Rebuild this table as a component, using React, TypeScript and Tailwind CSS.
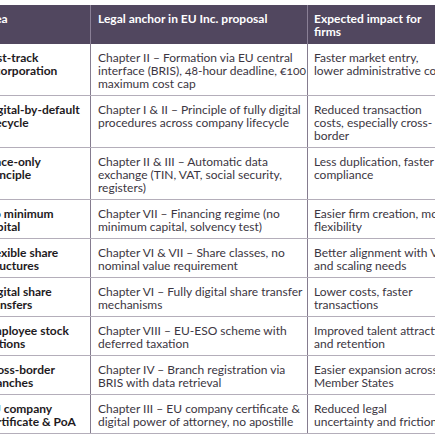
import React from "react";

const rows: [string[], string[], string[], number][] = [
  [["Fast-track", "incorporation"], ["Chapter II – Formation via EU central", "interface (BRIS), 48-hour deadline, €100", "maximum cost cap"], ["Faster market entry,", "lower administrative costs"], 3],
  [["Digital-by-default", "lifecycle"], ["Chapter I & II – Principle of fully digital", "procedures across company lifecycle"], ["Reduced transaction", "costs, especially cross-", "border"], 3],
  [["Once-only", "principle"], ["Chapter II & III – Automatic data", "exchange (TIN, VAT, social security,", "registers)"], ["Less duplication, faster", "compliance"], 3],
  [["No minimum", "capital"], ["Chapter VII – Financing regime (no", "minimum capital, solvency test)"], ["Easier firm creation, more", "flexibility"], 2],
  [["Flexible share", "structures"], ["Chapter VI & VII – Share classes, no", "nominal value requirement"], ["Better alignment with VC", "and scaling needs"], 2],
  [["Digital share", "transfers"], ["Chapter VI – Fully digital share transfer", "mechanisms"], ["Lower costs, faster", "transactions"], 2],
  [["Employee stock", "options"], ["Chapter VIII – EU-ESO scheme with", "deferred taxation"], ["Improved talent attraction", "and retention"], 2],
  [["Cross-border", "branches"], ["Chapter IV – Branch registration via", "BRIS with data retrieval"], ["Easier expansion across", "Member States"], 2],
  [["EU company", "certificate & PoA"], ["Chapter III – EU company certificate &", "digital power of attorney, no apostille"], ["Reduced legal", "uncertainty and friction"], 2],
];

function Lines({ lines }: { lines: string[] }) {
  return (
    <>
      {lines.map((l, i) => (
        <div key={i} className="whitespace-nowrap">{l}</div>
      ))}
    </>
  );
}

export default function App() {
  return (
    <div className="w-[435px] h-[435px] overflow-hidden bg-white pt-[5px]" style={{ fontFamily: "Lato, 'Noto Sans', sans-serif" }}>
      <div className="ml-[-23px] w-[560px] text-[12px] leading-[13px] oldstyle-nums">
        <div className="grid grid-cols-[113px_217px_230px] bg-[#51475f] text-white font-bold h-[39px]">
          <div className="px-[8px] pt-[7px]">Idea</div>
          <div className="px-[7px] pt-[7px] border-l border-[#8a8096]">Legal anchor in EU Inc. proposal</div>
          <div className="px-[6px] pt-[7px] border-l border-[#8a8096]"><Lines lines={["Expected impact for", "firms"]} /></div>
        </div>
        {rows.map(([a, b, c, n], i) => (
          <div key={i} className={`grid grid-cols-[113px_217px_230px] border-b border-[#b4aeba] ${n === 3 ? "h-[52px]" : "h-[39px]"}`}>
            <div className="px-[8px] pt-[7px] font-bold text-[#1e1a22]"><Lines lines={a} /></div>
            <div className="px-[7px] pt-[7px] text-[#3c3642] border-l border-[#857c8f]"><Lines lines={b} /></div>
            <div className="px-[6px] pt-[7px] text-[#3c3642] border-l border-[#857c8f]"><Lines lines={c} /></div>
          </div>
        ))}
      </div>
    </div>
  );
}
